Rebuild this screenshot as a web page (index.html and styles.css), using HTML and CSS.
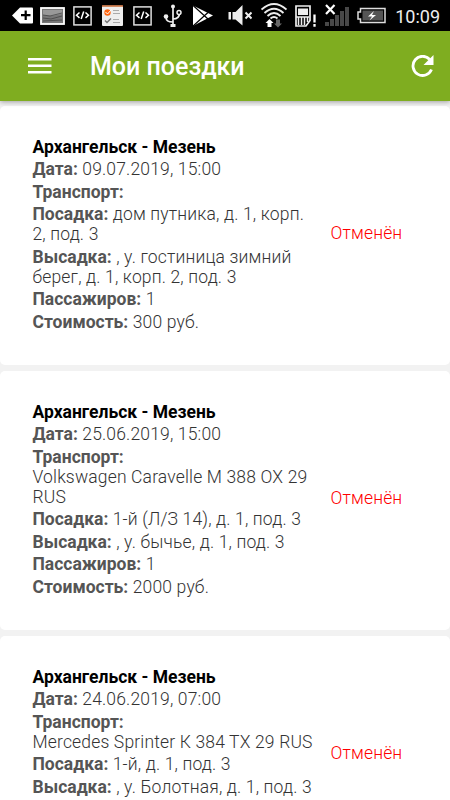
FILE: index.html
```
<!DOCTYPE html>
<html lang="ru">
<head>
    <meta charset="UTF-8">
    <meta name="viewport" content="width=device-width, initial-scale=1.0">
    <title>Мои поездки</title>
    <link rel="stylesheet" href="styles.css">
</head>
<body>

  <div class="status-bar">
    <div class="notifications">
      <svg class="tag" width="21" height="31" viewBox="12 0 21 31">
        <path d="M12 15.500l8-8h12a1 1 0 0 1 1 1v14a1 1 0 0 1-1 1H20z" fill="#fff"/>
        <path d="M25.700 10.500v9.500M21 15.200h9.500" stroke="#000" stroke-width="2.200"/>
      </svg>
      <svg class="picture" width="25" height="31" viewBox="40 0 25 31">
        <rect x="41" y="8" width="23" height="16" fill="#777" stroke="#fff" stroke-width="1.800"/>
        <path d="M43 10h19v4l-10 2-9-1z" fill="#999"/>
        <path d="M43 15l7 1 12-3M43 18l8 1 11-3M43 21l19-1" fill="none" stroke="#444" stroke-width="0.800"/>
      </svg>
      <svg width="19" height="31" viewBox="73 0 19 31">
        <rect x="73.900" y="6.900" width="17.200" height="18" fill="none" stroke="#ddd" stroke-width="1.500"/>
        <path d="M79.500 12.500l-3 2.700 3 2.700M85.500 12.500l3 2.700-3 2.700M83.700 11.500l-2.500 7.500" fill="none" stroke="#fff" stroke-width="1.500"/>
      </svg>
      <svg width="21" height="31" viewBox="102 0 21 31">
        <rect x="102" y="5.500" width="21" height="20.500" rx="1" fill="#eee"/>
        <path d="M102 6h21" stroke="#c96a35" stroke-width="1.500"/>
        <circle cx="107.500" cy="12.500" r="3.200" fill="#ff6712"/>
        <path d="M105.500 12l2 2 4-4.500" fill="none" stroke="#fff" stroke-width="1"/>
        <path d="M105 20.500l2 2 4-4" fill="none" stroke="#777" stroke-width="1.500"/>
        <path d="M113 10.500h6M113 13.500h7M113 19.500h6M113 22.500h7" stroke="#aaa" stroke-width="1"/>
      </svg>
      <svg class="code" width="19" height="31" viewBox="73 0 19 31">
        <rect x="73.900" y="6.900" width="17.200" height="18" fill="none" stroke="#ddd" stroke-width="1.500"/>
        <path d="M79.500 12.500l-3 2.700 3 2.700M85.500 12.500l3 2.700-3 2.700M83.700 11.500l-2.500 7.500" fill="none" stroke="#fff" stroke-width="1.500"/>
      </svg>
      <svg class="usb" width="19" height="31" viewBox="163 0 19 31">
        <path d="M173 6v19M166 17c0 4 2 5 7 5M179.500 13c0 4-2 6-6.500 6" fill="none" stroke="#eee" stroke-width="1.700"/>
        <circle cx="173" cy="6.500" r="2" fill="#eee"/>
        <circle cx="166" cy="16.500" r="2.300" fill="#eee"/>
        <circle cx="179" cy="12.500" r="2" fill="#000" stroke="#eee" stroke-width="1.500"/>
        <rect x="170.500" y="24" width="5" height="3" fill="#eee"/>
      </svg>
      <svg width="21" height="31" viewBox="193 0 21 31">
        <path d="M193 5.500l20 10-20 10.500z" fill="#fff"/>
        <path d="M193 5.500l15 13.500M193 26l15-13.500" stroke="#000" stroke-width="1.300"/>
      </svg>
    </div>
    <div class="system">
      <svg class="mute" width="24" height="31" viewBox="228 0 24 31">
        <path d="M228.500 12h2.500v7.500h-2.500zM232.500 12h3l7-7v20.500l-7-6h-3z" fill="#eee"/>
        <path d="M245.500 12.500l6 6M251.500 12.500l-6 6" stroke="#eee" stroke-width="2"/>
      </svg>
      <svg width="26" height="31" viewBox="261 0 26 31">
        <path d="M261.500 9.500q12.500-11 25 0M264.500 13q9.500-8.500 19 0M267.500 16q6.500-6 13 0M270.500 18.500q3.500-3 7 0" fill="none" stroke="#eee" stroke-width="1.900"/>
        <path d="M269.500 19l4 4h-2v4h-4v-4h-2z" fill="#fff"/>
        <path d="M278 27.500l-4-4h2v-4h4v4h2z" fill="#666"/>
      </svg>
      <svg width="22" height="31" viewBox="295 0 22 31">
        <path d="M296 6h14v14.500l-4 5.500h-10z" fill="none" stroke="#eee" stroke-width="1.700"/>
        <path d="M298 8.500h10v6.500h-10z" fill="#eee"/>
        <path d="M298.500 17v8M301.500 17v8M304.500 17v8M307.500 17v5M296 17h13" stroke="#eee" stroke-width="1.500"/>
        <path d="M314.500 14.500v8M314.500 24v2.700" stroke="#fff" stroke-width="2.300"/>
      </svg>
      <svg width="24" height="31" viewBox="325 0 24 31">
        <path d="M325 22h4v4h-4zM330 19h4v7h-4zM335 15h4v11h-4zM340 11h4v15h-4zM345 7h4v19h-4z" fill="#484848"/>
        <path d="M326 5l8.500 9M334.500 5l-8.500 9" stroke="#fff" stroke-width="2.200"/>
      </svg>
      <svg width="29" height="31" viewBox="357 0 29 31">
        <path d="M360.500 8.500h24.500v14h-24.500v-3.500h-2.500v-7h2.500z" fill="#000" stroke="#ddd" stroke-width="1.500"/>
        <rect x="362.500" y="10.500" width="20.500" height="10" fill="#555"/>
        <path d="M374 11l-6 5.500h4l-2.500 4 6.500-5.500h-4z" fill="#fff"/>
      </svg>
      <span class="clock">10:09</span>
    </div>
  </div>

  <header class="app-bar">
    <svg class="menu" width="24" height="16" viewBox="0 0 24 16">
      <path d="M0 1.300h23.500M0 7.800h23.500M0 14.200h23.500" stroke="#fff" stroke-width="2.500"/>
    </svg>
    <h1>Мои поездки</h1>
    <svg class="refresh" width="23" height="23" viewBox="0 0 23 23">
      <path d="M18.800 4.500A9.600 9.600 0 1 0 20.500 14.500" fill="none" stroke="#fff" stroke-width="2.800"/>
      <path d="M22.500 0v10h-10z" fill="#fff"/>
    </svg>
  </header>

  <main class="trips">
    <div class="card">
      <div class="info">
        <h2>Архангельск - Мезень</h2>
        <p><b>Дата:</b> 09.07.2019, 15:00</p>
        <p><b>Транспорт:</b></p>
        <p><b>Посадка:</b> дом путника, д. 1, корп. 2, под. 3</p>
        <p><b>Высадка:</b> , у. гостиница зимний берег, д. 1, корп. 2, под. 3</p>
        <p><b>Пассажиров:</b> 1</p>
        <p><b>Стоимость:</b> 300 руб.</p>
      </div>
      <div class="state">Отменён</div>
    </div>

    <div class="card">
      <div class="info">
        <h2>Архангельск - Мезень</h2>
        <p><b>Дата:</b> 25.06.2019, 15:00</p>
        <p><b>Транспорт:</b><br>Volkswagen Caravelle М 388 ОХ 29 RUS</p>
        <p><b>Посадка:</b> 1-й (Л/З 14), д. 1, под. 3</p>
        <p><b>Высадка:</b> , у. бычье, д. 1, под. 3</p>
        <p><b>Пассажиров:</b> 1</p>
        <p><b>Стоимость:</b> 2000 руб.</p>
      </div>
      <div class="state">Отменён</div>
    </div>

    <div class="card">
      <div class="info">
        <h2>Архангельск - Мезень</h2>
        <p><b>Дата:</b> 24.06.2019, 07:00</p>
        <p><b>Транспорт:</b><br>Mercedes Sprinter К 384 ТХ 29 RUS</p>
        <p><b>Посадка:</b> 1-й, д. 1, под. 3</p>
        <p><b>Высадка:</b> , у. Болотная, д. 1, под. 3</p>
      </div>
      <div class="state">Отменён</div>
    </div>
  </main>

</body>
</html>
```
FILE: styles.css
```
body {
    display: flex;
    flex-direction: column;
    height: 800px;
    margin: 0;
    overflow: hidden;
    background-color: #f2f2f2;
    font-family: Roboto, sans-serif;
}

.status-bar {
    display: flex;
    flex: none;
    justify-content: space-between;
    box-sizing: border-box;
    height: 31px;
    padding: 0 10px 0 12px;
    background-color: #000;
}

.notifications,
.system {
    display: flex;
}

.notifications {
    gap: 10px;
}

.system {
    gap: 8px;
}

.tag {
    margin-right: -3px;
}

.picture {
    margin-right: -2px;
}

.code,
.usb,
.mute {
    margin-right: 1px;
}

.clock {
    margin-left: 1px;
    color: #eee;
    font-size: 18px;
    line-height: 34px;
}

.app-bar {
    display: flex;
    flex: none;
    align-items: center;
    box-sizing: border-box;
    height: 70px;
    padding: 0 16px 0 28px;
    background-color: #7fad20;
    box-shadow: 0 1px 5px rgba(0, 0, 0, 0.35);
    z-index: 1;
}

.app-bar h1 {
    margin: 0 auto 0 38px;
    color: #fff;
    font-size: 25px;
    font-weight: 500;
}

.trips {
    display: flex;
    flex: 1;
    flex-direction: column;
    gap: 6px;
    min-height: 0;
    padding-top: 5px;
}

.card {
    display: flex;
    flex: none;
    align-items: center;
    padding: 30.5px 0 33.5px 32.5px;
    border-radius: 5px;
    background-color: #fff;
}

.info {
    display: flex;
    flex-direction: column;
    gap: 2.5px;
    width: 282px;
    min-height: 175px;
    margin-right: 16px;
    color: #333;
    font-size: 17.5px;
    font-weight: 300;
    letter-spacing: 0.16px;
    line-height: 20px;
}

.info h2,
.info p {
    margin: 0;
    font-size: inherit;
}

.info h2 {
    color: #000;
    font-weight: 700;
    letter-spacing: 0;
}

.info b {
    color: #555;
    font-weight: 700;
    letter-spacing: 0;
}

.state {
    margin-bottom: 3px;
    color: #f00;
    font-size: 17.5px;
    font-weight: 300;
    letter-spacing: 0.16px;
    line-height: 20px;
}
```
